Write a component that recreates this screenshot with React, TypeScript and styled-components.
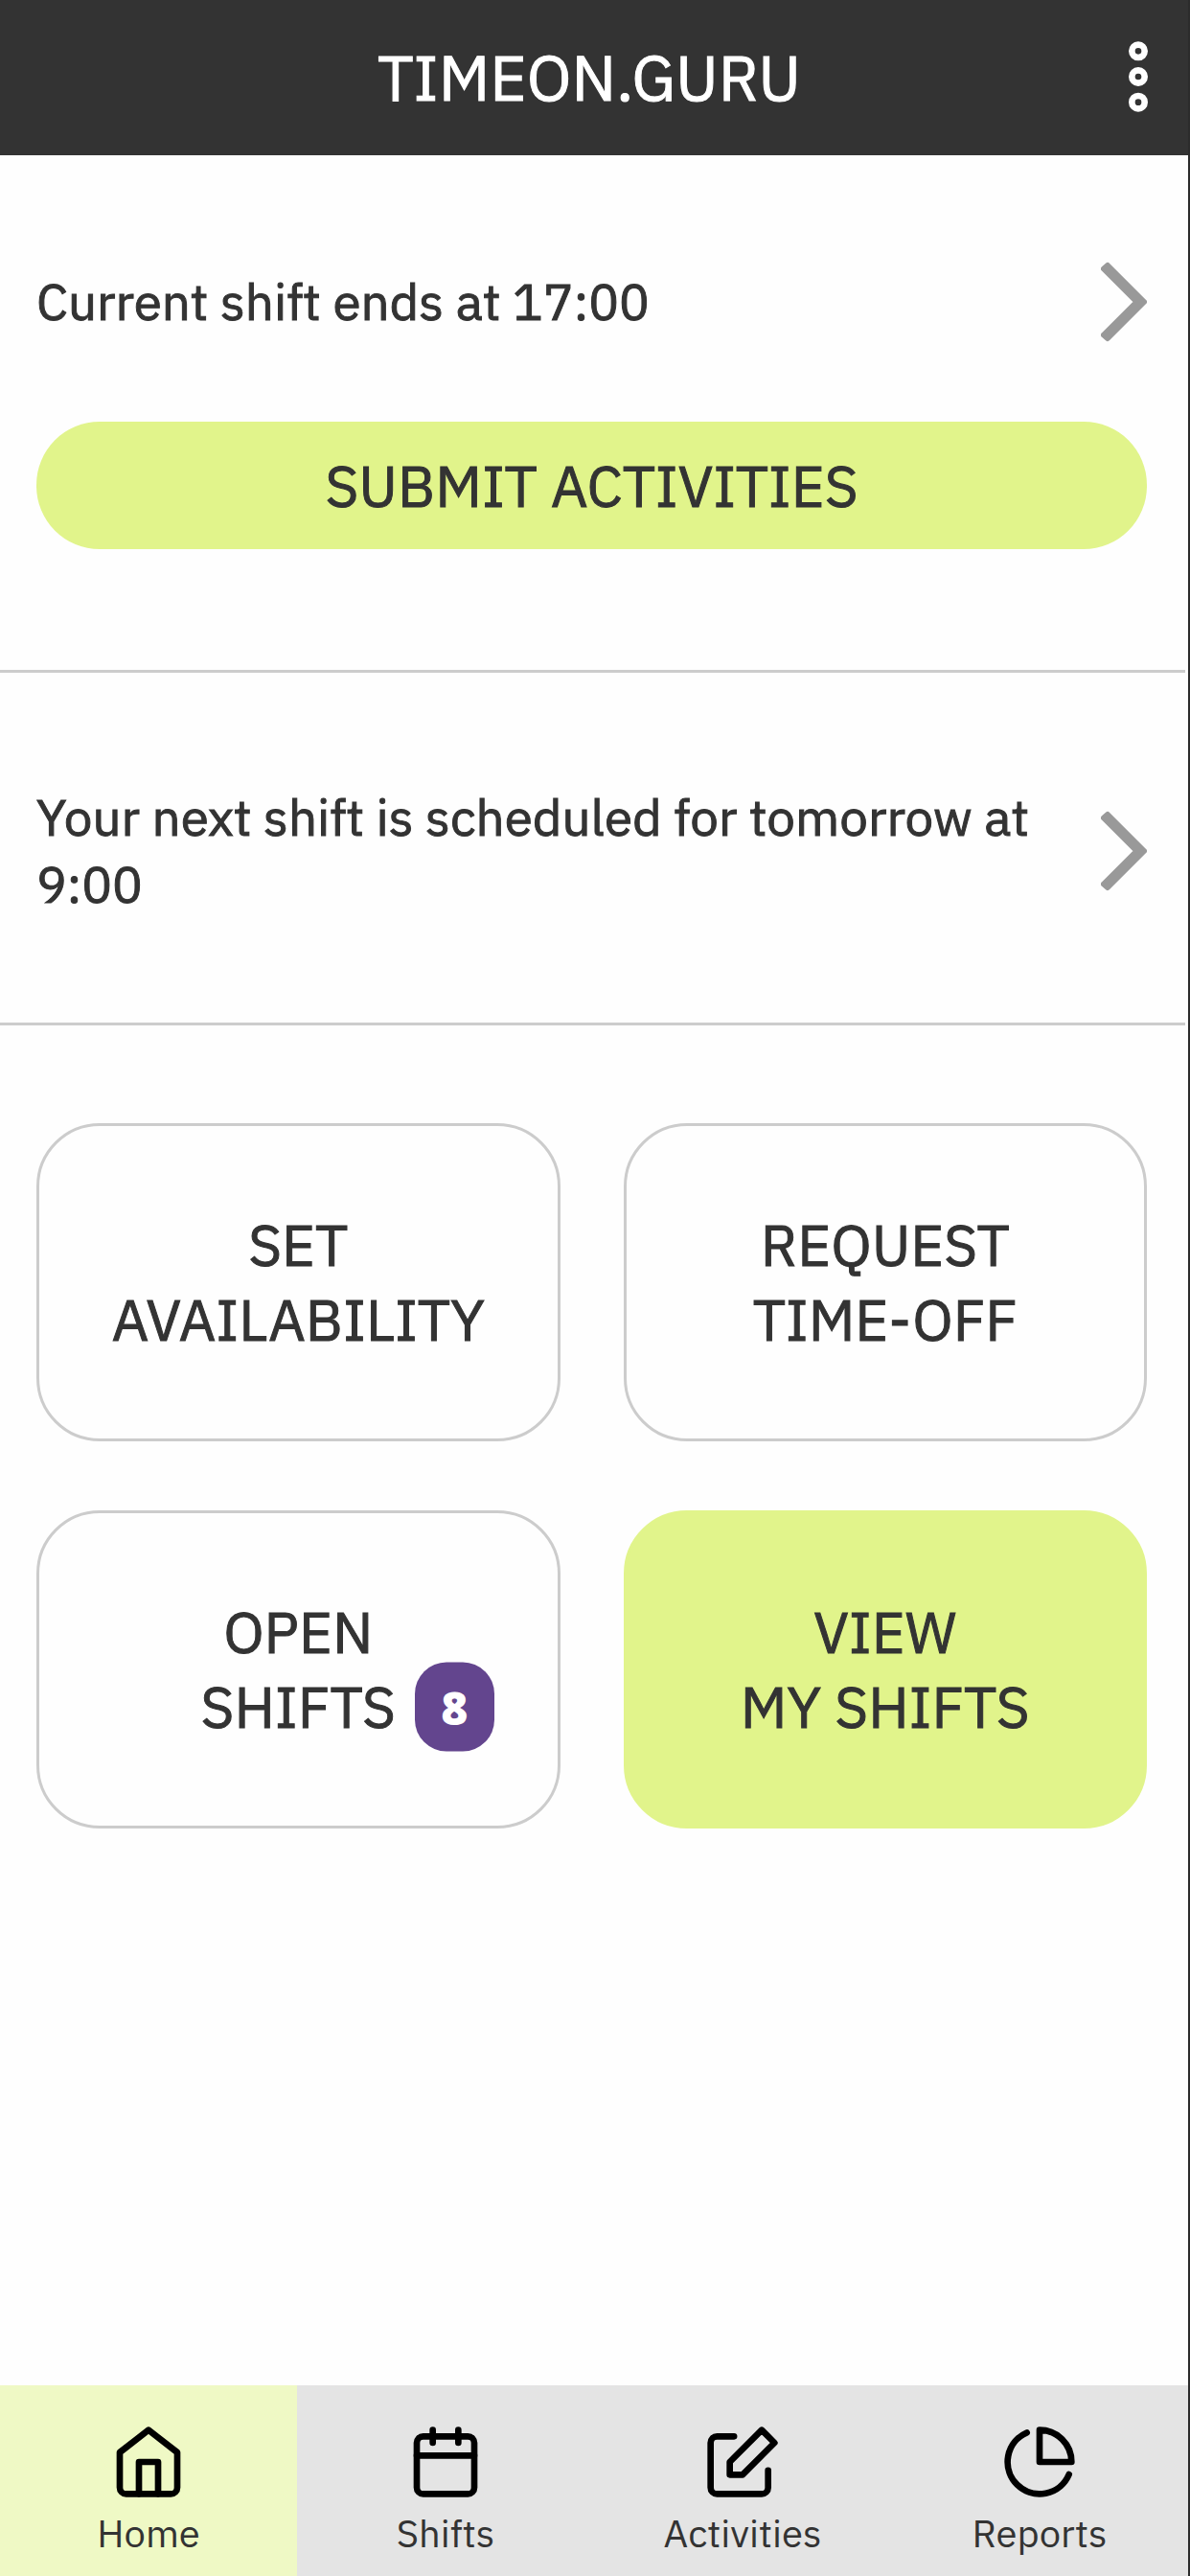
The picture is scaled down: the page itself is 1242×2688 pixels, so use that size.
import React from 'react';
import styled, { createGlobalStyle, css } from 'styled-components';

const color = {
  ink: '#333333',
  paper: '#fefefe',
  lime: '#e1f48b',
  limeSoft: '#eff9c5',
  grey: '#e4e4e4',
  line: '#cccccc',
  arrow: '#999999',
  badge: '#63458e',
};

const GlobalStyle = createGlobalStyle`
  *, *::before, *::after { box-sizing: border-box; }
  body {
    margin: 0;
    background: ${color.paper};
    color: ${color.ink};
    font-family: "IBM Plex Sans", Roboto, "Liberation Sans", sans-serif;
    -webkit-text-stroke: 1px currentColor;
  }
  button { font: inherit; color: inherit; cursor: pointer; }
  h1, p { margin: 0; font-weight: 400; }
`;

const Screen = styled.div`
  display: flex;
  flex-direction: column;
  min-height: 100vh;
  border-right: 2px solid #2c2c2c;
`;

const Header = styled.header`
  display: grid;
  grid-template-columns: 1fr auto;
  align-items: center;
  height: 162px;
  padding: 0 12px 3px 82px;
  background: ${color.ink};
  color: #ffffff;
`;

const Title = styled.h1`
  font-size: 66px;
  line-height: 80px;
  text-align: center;
`;

const MenuButton = styled.button`
  display: flex;
  padding: 0;
  border: 0;
  background: none;
`;

const Main = styled.main`
  flex: 1;
`;

const Section = styled.section<{ $top: number; $bottom: number }>`
  margin-right: 3px;
  padding: ${p => p.$top}px 40px ${p => p.$bottom}px 38px;
  border-bottom: 3px solid ${color.line};
`;

const ShiftLink = styled.a`
  display: flex;
  align-items: center;
  justify-content: space-between;
  gap: 48px;
  color: inherit;
  text-decoration: none;
`;

const ShiftText = styled.p`
  font-size: 53px;
  line-height: 70px;
`;

const Chevron = styled.svg`
  flex: none;
  width: 48px;
  height: 84px;
`;

const actionText = css`
  font-size: 60px;
  line-height: 78px;
  text-transform: uppercase;
`;

const SubmitButton = styled.button`
  && {
    ${actionText}
  }
  display: block;
  width: 100%;
  height: 133px;
  margin-top: 83px;
  padding: 0;
  border: 0;
  border-radius: 66px;
  background: ${color.lime};
`;

const Tiles = styled.div`
  display: grid;
  grid-template-columns: 1fr 1fr;
  gap: 72px 66px;
  padding: 102px 43px 102px 38px;
`;

const Tile = styled.button<{ $primary?: boolean }>`
  && {
    ${actionText}
  }
  display: flex;
  flex-direction: column;
  align-items: center;
  justify-content: center;
  height: 332px;
  padding: 0;
  border: 3px solid ${p => (p.$primary ? color.lime : color.line)};
  border-radius: 66px;
  background: ${p => (p.$primary ? color.lime : 'transparent')};
`;

const TileLine = styled.span`
  position: relative;
`;

const Badge = styled.span`
  position: absolute;
  top: 50%;
  left: 100%;
  width: 83px;
  height: 93px;
  margin-left: 20px;
  border-radius: 33px;
  background: ${color.badge};
  color: #ffffff;
  font-family: "Open Sans", Inter, sans-serif;
  font-size: 48px;
  font-weight: 800;
  line-height: 94px;
  text-align: center;
  transform: translateY(-50%);
  -webkit-text-stroke: 0;
`;

const TabBar = styled.nav`
  display: grid;
  grid-template-columns: repeat(4, 1fr);
  background: ${color.grey};
  -webkit-text-stroke: 0;
`;

const Tab = styled.a<{ $active?: boolean }>`
  display: flex;
  flex-direction: column;
  align-items: center;
  gap: 10px;
  padding: 40px 0 21px;
  background: ${p => (p.$active ? color.limeSoft : 'transparent')};
  color: inherit;
  font-size: 40px;
  line-height: 48px;
  text-decoration: none;
`;

const Glyph = styled.svg`
  width: 80px;
  height: 80px;
  fill: none;
  stroke: #000000;
  stroke-width: 2;
  stroke-linecap: round;
  stroke-linejoin: round;
`;

const MenuGlyph = styled(Glyph)`
  stroke: #ffffff;
`;

const Arrow = () => (
  <Chevron viewBox="0 0 48 84" aria-hidden="true">
    <path
      d="M7 4 45 42 7 80 3 76.5 37.5 42 3 7.5z"
      fill={color.arrow}
      stroke={color.arrow}
      strokeWidth="6"
      strokeLinejoin="round"
    />
  </Chevron>
);

const tiles = [
  { lines: ['Set', 'Availability'] },
  { lines: ['Request', 'Time-off'] },
  { lines: ['Open', 'Shifts'], badge: 8 },
  { lines: ['View', 'My shifts'], primary: true },
];

const tabs = [
  {
    label: 'Home',
    active: true,
    icon: (
      <>
        <path d="M3 9l9-7 9 7v11a2 2 0 0 1-2 2H5a2 2 0 0 1-2-2z" />
        <path d="M9 22V12h6v10" />
      </>
    ),
  },
  {
    label: 'Shifts',
    icon: (
      <>
        <rect x="3" y="4" width="18" height="18" rx="2" />
        <path d="M16 2v4M8 2v4M3 10h18" />
      </>
    ),
  },
  {
    label: 'Activities',
    icon: (
      <>
        <path d="M20 14.66V20a2 2 0 0 1-2 2H4a2 2 0 0 1-2-2V6a2 2 0 0 1 2-2h5.34" />
        <path d="M18 2l4 4-10 10H8v-4L18 2z" />
      </>
    ),
  },
  {
    label: 'Reports',
    icon: (
      <>
        <path d="M21.21 15.89A10 10 0 1 1 8 2.83" />
        <path d="M22 12A10 10 0 0 0 12 2v10z" />
      </>
    ),
  },
];

export default function App() {
  return (
    <Screen>
      <GlobalStyle />
      <Header>
        <Title>TIMEON.GURU</Title>
        <MenuButton type="button" aria-label="Menu">
          <MenuGlyph viewBox="0 0 24 24" aria-hidden="true">
            <circle cx="12" cy="4" r="2" />
            <circle cx="12" cy="12" r="2" />
            <circle cx="12" cy="20" r="2" />
          </MenuGlyph>
        </MenuButton>
      </Header>
      <Main>
        <Section $top={111} $bottom={126}>
          <ShiftLink href="#current-shift">
            <ShiftText>Current shift ends at 17:00</ShiftText>
            <Arrow />
          </ShiftLink>
          <SubmitButton type="button">Submit activities</SubmitButton>
        </Section>
        <Section $top={116} $bottom={109}>
          <ShiftLink href="#next-shift">
            <ShiftText>Your next shift is scheduled for tomorrow at 9:00</ShiftText>
            <Arrow />
          </ShiftLink>
        </Section>
        <Tiles>
          {tiles.map(({ lines, badge, primary }) => (
            <Tile key={lines[1]} type="button" $primary={primary}>
              <TileLine>{lines[0]}</TileLine>
              <TileLine>
                {lines[1]}
                {badge && <Badge>{badge}</Badge>}
              </TileLine>
            </Tile>
          ))}
        </Tiles>
      </Main>
      <TabBar aria-label="Main">
        {tabs.map(({ label, active, icon }) => (
          <Tab
            key={label}
            href={`#${label.toLowerCase()}`}
            $active={active}
            aria-current={active ? 'page' : undefined}
          >
            <Glyph viewBox="0 0 24 24" aria-hidden="true">
              {icon}
            </Glyph>
            {label}
          </Tab>
        ))}
      </TabBar>
    </Screen>
  );
}
